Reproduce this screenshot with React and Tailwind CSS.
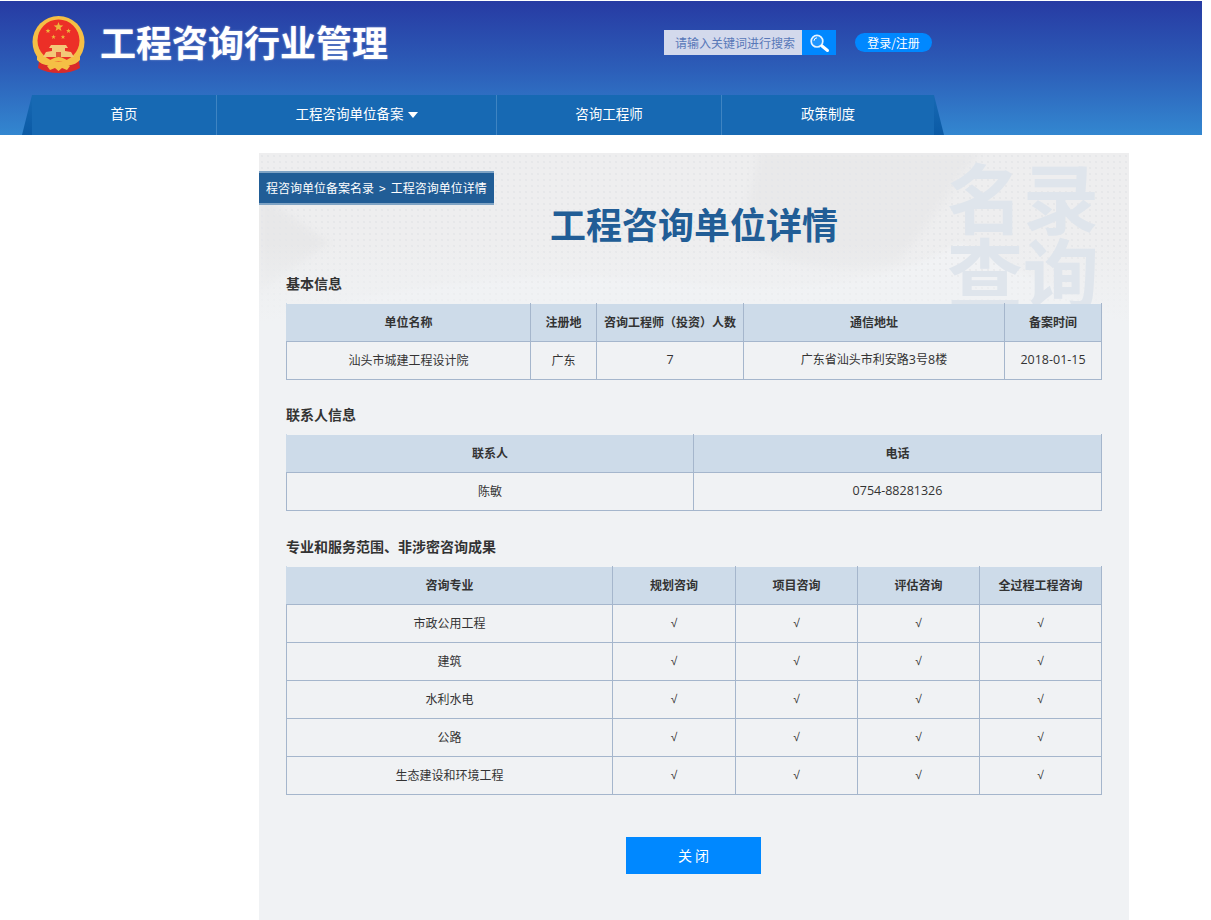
const NAV = [
  { label: '首页', width: 'w-[184px]' },
  { label: '工程咨询单位备案', width: 'w-[280px]', caret: true },
  { label: '咨询工程师', width: 'w-[225px]' },
  { label: '政策制度', width: 'w-[213px]' },
];

const SCOPE_ROWS = ['市政公用工程', '建筑', '水利水电', '公路', '生态建设和环境工程'];

function Star({ x, y, r }) {
  const pts = [];
  for (let i = 0; i < 10; i++) {
    const a = -Math.PI / 2 + (i * Math.PI) / 5;
    const d = i % 2 ? r * 0.42 : r;
    pts.push(`${(x + d * Math.cos(a)).toFixed(2)},${(y + d * Math.sin(a)).toFixed(2)}`);
  }
  return <polygon points={pts.join(' ')} fill="#eeb63c" />;
}

function Emblem() {
  return (
    <svg width="54" height="57" viewBox="0 0 54 57" className="shrink-0 mt-[7px]">
      {/* ribbon */}
      <path d="M8 38 L6 52 Q14 57 27 57 Q40 57 48 52 L46 38 Z" fill="#d92a2a" />
      {/* ring */}
      <circle cx="26.5" cy="26" r="26" fill="#f5bf45" />
      <circle cx="26.5" cy="24.5" r="21" fill="#ec2f27" />
      <Star x={26.5} y={11} r={5} />
      <Star x={16} y={15} r={2.6} />
      <Star x={36.5} y={15} r={2.6} />
      <Star x={21.5} y={21} r={2.4} />
      <Star x={31} y={21} r={2.4} />
      {/* gate */}
      <path d="M19 29 L34 29 L36 32 L33 32 L33 35 L39 36 L42 41 L11 41 L14 36 L20 35 L20 32 L17 32 Z" fill="#f3c878" />
      <rect x="24" y="36" width="5" height="5" fill="#e2563a" />
      {/* knots */}
      <path d="M5 40 Q13 48 20 43 Q26.5 39 33 43 Q40 48 48 40 L48 44 Q40 52 33 47 Q26.5 43 20 47 Q13 52 5 44 Z" fill="#f5bf45" />
      <path d="M15 50 L38 50 L35 54 L30 52 L26.5 55 L23 52 L18 54 Z" fill="#f5bf45" />
    </svg>
  );
}

function SearchIcon() {
  return (
    <svg width="22" height="22" viewBox="0 0 22 22" fill="none">
      <circle cx="9" cy="9.2" r="5.8" fill="#ffffff" fillOpacity="0.12" stroke="#e6f3ff" strokeWidth="1.7" />
      <path d="M6 8.8 A3.2 3.2 0 0 1 9 5.8" stroke="white" strokeWidth="1" />
      <path d="M14 14 L19.5 18.5" stroke="white" strokeWidth="3" strokeLinecap="round" />
    </svg>
  );
}

function Header() {
  return (
    <header className="mt-px w-[1202px] h-[134px] bg-[linear-gradient(180deg,#273ba3_0%,#2c5db8_50%,#3387d0_100%)]">
      <div className="h-[94px] flex items-center pl-[32px] pb-[14px]">
        <Emblem />
        <div className="ml-[14px] w-[564px] text-[36px] leading-none font-bold text-white [text-shadow:0_0_2px_rgba(255,255,255,0.5)]">
          工程咨询行业管理
        </div>
        <div className="flex h-[25px] w-[172px] mt-[3px]">
          <div className="w-[138px] bg-[#d3d9ec] text-[#5878b8] text-[12px] leading-[25px] pl-[11px]">请输入关键词进行搜索</div>
          <div className="w-[34px] bg-[#0088ff] flex items-center justify-center">
            <SearchIcon />
          </div>
        </div>
        <div className="ml-[19px] mt-[3px] w-[77px] h-[19px] rounded-full bg-[#0088ff] text-white text-[12px] leading-[19px] text-center">
          登录/注册
        </div>
      </div>
      <nav className="relative ml-[32px] w-[902px] h-[40px] flex bg-[#1769b3]">
        <div className="absolute -left-[10px] top-0 h-full w-[10px] bg-[linear-gradient(180deg,#1769b3,#0b5aa5)] [clip-path:polygon(100%_0,100%_100%,0_100%)]" />
        <div className="absolute -right-[10px] top-0 h-full w-[10px] bg-[linear-gradient(180deg,#1769b3,#0b5aa5)] [clip-path:polygon(0_0,100%_100%,0_100%)]" />
        {NAV.map((item, i) => (
          <div
            key={item.label}
            className={`${item.width} h-full pb-[4px] flex items-center justify-center gap-[4px] text-[13.5px] text-white ${i > 0 ? 'border-l border-[#3f84c2]' : ''}`}
          >
            {item.label}
            {item.caret && <span className="mt-[3px] border-x-[5px] border-t-[6px] border-x-transparent border-t-white" />}
          </div>
        ))}
      </nav>
    </header>
  );
}

function DataTable({ cols, head, rows }) {
  return (
    <table className="w-[815px] table-fixed border-collapse text-[12px] text-[#333]">
      <colgroup>
        {cols.map((w, i) => (
          <col key={i} style={{ width: w }} />
        ))}
      </colgroup>
      <thead>
        <tr>
          {head.map(h => (
            <th key={h} className="h-[38px] pb-[2px] bg-[#cddbe9] font-bold border border-[#a5b6cc] border-t-transparent first:border-l-[#cddbe9]">
              {h}
            </th>
          ))}
        </tr>
      </thead>
      <tbody>
        {rows.map((row, r) => (
          <tr key={r}>
            {row.map((c, i) => (
              <td key={i} className="h-[38px] pb-[2px] text-center border border-[#a5b6cc]">
                {c}
              </td>
            ))}
          </tr>
        ))}
      </tbody>
    </table>
  );
}

function Num({ children }) {
  return <span className="font-['Open_Sans',sans-serif] text-[12.5px]">{children}</span>;
}

function Check() {
  return <span className="font-['Liberation_Sans',sans-serif] text-[12px]">√</span>;
}

function SectionTitle({ children, className }) {
  return <h3 className={`h-[20px] mb-[10px] text-[14px] leading-[20px] font-bold text-[#333] ${className}`}>{children}</h3>;
}

function PanelBackdrop() {
  return (
    <div className="absolute inset-x-0 top-0 h-[170px] overflow-hidden bg-[#eeeeef]">
      <svg width="870" height="170" className="absolute inset-0 blur-[3px]">
        <path d="M0 40 L70 90 L0 140 Z" fill="#e8e8e9" />
        <path d="M500 0 L720 0 L640 110 Q560 130 480 90 Z" fill="#e9e9ea" />
        <path d="M0 170 Q200 110 420 130 Q600 150 700 90 L870 170 Z" fill="#f1f2f4" />
      </svg>
      <div className="absolute inset-0 bg-[radial-gradient(#e6e7e9_0.7px,transparent_0.8px)] bg-[size:6px_6px]" />
      <div className="absolute inset-x-0 bottom-0 h-[80px] bg-[linear-gradient(180deg,transparent,#f0f2f4)]" />
      <div className="absolute left-[688px] top-[5px] w-[170px] text-[76px] leading-[75px] font-bold text-[#dfe5ec]">
        名录<br />查询
      </div>
    </div>
  );
}

export default function App() {
  return (
    <div className="min-h-[920px] bg-white font-['Noto_Sans_CJK_SC','Microsoft_YaHei',sans-serif]">
      <Header />
      <main className="relative mt-[18px] ml-[259px] w-[870px] h-[767px] bg-[#f0f2f4] overflow-hidden">
        <PanelBackdrop />
        <div className="relative">
          <div className="mt-[18px] w-[235px] h-[34px] flex items-center whitespace-nowrap bg-[#215d96] border-y-2 border-[#7fa3c4] pl-[7px] text-[12px] text-white">
            程咨询单位备案名录<span className="mx-[5px]">&gt;</span>工程咨询单位详情
          </div>
          <h1 className="h-[44px] -mt-[4px] text-center text-[36px] leading-[44px] font-bold text-[#215d96]">工程咨询单位详情</h1>
          <div className="pl-[27px]">
            <SectionTitle className="mt-[28px]">基本信息</SectionTitle>
            <DataTable
              cols={['244px', '66px', '147px', '261px', '97px']}
              head={['单位名称', '注册地', '咨询工程师（投资）人数', '通信地址', '备案时间']}
              rows={[['汕头市城建工程设计院', '广东', <Num>7</Num>, <>广东省汕头市利安路<Num>3</Num>号<Num>8</Num>楼</>, <Num>2018-01-15</Num>]]}
            />
            <SectionTitle className="mt-[24px]">联系人信息</SectionTitle>
            <DataTable
              cols={['407px', '408px']}
              head={['联系人', '电话']}
              rows={[['陈敏', <Num>0754-88281326</Num>]]}
            />
            <SectionTitle className="mt-[25px]">专业和服务范围、非涉密咨询成果</SectionTitle>
            <DataTable
              cols={['326px', '123px', '122px', '122px', '122px']}
              head={['咨询专业', '规划咨询', '项目咨询', '评估咨询', '全过程工程咨询']}
              rows={SCOPE_ROWS.map(name => [name, <Check />, <Check />, <Check />, <Check />])}
            />
          </div>
          <button className="block ml-[367px] mt-[42px] w-[135px] h-[37px] bg-[#0088ff] text-white text-[14px]">关 闭</button>
        </div>
      </main>
    </div>
  );
}
